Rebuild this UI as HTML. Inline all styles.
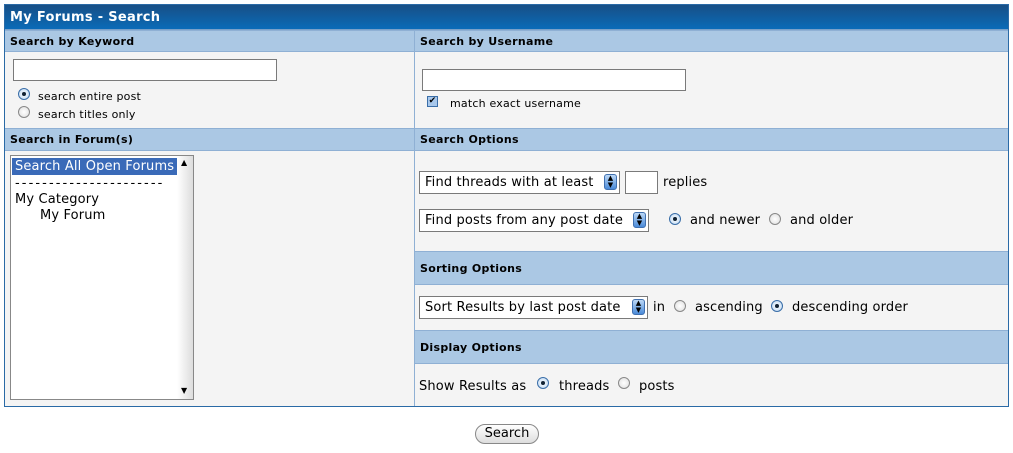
<!DOCTYPE html>
<html><head><style>
*{box-sizing:border-box;margin:0;padding:0}
body{width:1013px;height:453px;background:#fff;font-family:"DejaVu Sans",Verdana,sans-serif;font-size:13px;letter-spacing:0.15px;color:#000;position:relative;overflow:hidden}
div,span{position:absolute}
.frame{left:4px;top:4px;width:1005px;height:403px;border:1px solid #2a6aa6;background:#f4f4f4}
.title{left:5px;top:5px;width:1003px;height:25px;background:linear-gradient(#184f86,#0a6bb8);color:#fff;font-weight:bold;font-size:13px;padding:5px 5px;border-bottom:1px solid #7aa0c8;letter-spacing:0.3px}
.h{background:#abc8e4;font-weight:bold;font-size:11px;letter-spacing:0.3px;padding-left:5px;border-top:1px solid #8fb0d4;border-bottom:1px solid #8fb0d4;display:flex;align-items:center}
.vl{left:414px;top:30px;width:1px;height:376px;background:#8fb0d4}
.inp{background:#fff;border:1px solid #7a7a7a}
.rad{width:12px;height:12px;border-radius:50%;border:1px solid #888;background:radial-gradient(#fff,#ddd)}
.rad.on::after{content:"";position:absolute;left:3px;top:3px;width:4px;height:4px;border-radius:50%;background:#123}
.rad.on{border-color:#3a6ea8;background:radial-gradient(#fff,#b8d4f0)}
.sel{background:#fff;border:1px solid #7a7a7a;padding:3px 5px;white-space:nowrap}
.arr{width:13px;height:16px;top:2px;right:2px;background:linear-gradient(#bcd8f6,#4a8ad8);border-radius:3px;border:1px solid #4070b0;color:#000;font-size:7px;line-height:7px;text-align:center;letter-spacing:0}
.t{white-space:nowrap}
.s{font-size:11px;letter-spacing:0.2px}
</style></head><body>
<div class="frame"></div>
<div class="title">My Forums - Search</div>
<div class="vl"></div>
<div class="h" style="left:5px;top:30px;width:409px;height:22px">Search by Keyword</div>
<div class="h" style="left:415px;top:30px;width:593px;height:22px">Search by Username</div>
<div class="inp" style="left:13px;top:59px;width:264px;height:22px"></div>
<div class="rad on" style="left:18px;top:88px"></div><span class="t s" style="left:38px;top:90px">search entire post</span>
<div class="rad" style="left:18px;top:106px"></div><span class="t s" style="left:38px;top:108px">search titles only</span>
<div class="inp" style="left:422px;top:69px;width:264px;height:22px"></div>
<div style="left:427px;top:96px;width:11px;height:11px;border:1px solid #3a6ea8;background:#a8c8ec;font-size:9px;line-height:9px;text-align:center">✔</div>
<span class="t s" style="left:450px;top:97px">match exact username</span>
<div class="h" style="left:5px;top:128px;width:409px;height:23px">Search in Forum(s)</div>
<div class="h" style="left:415px;top:128px;width:593px;height:23px">Search Options</div>
<div style="left:10px;top:155px;width:184px;height:245px;background:#fff;border:1px solid #888"></div>
<div style="left:12px;top:158px;width:165px;height:17px;background:#3a6ab8;color:#fff;padding-left:3px;padding-top:1px" class="t">Search All Open Forums</div>
<div style="left:177px;top:156px;width:16px;height:243px;background:linear-gradient(90deg,#fff,#ddd);font-size:8px;text-align:center"><span style="left:4px;top:2px">▲</span><span style="left:4px;top:230px">▼</span></div>
<span class="t" style="left:15px;top:176px;letter-spacing:2.1px">----------------------</span>
<span class="t" style="left:15px;top:192px">My Category</span>
<span class="t" style="left:40px;top:208px">My Forum</span>
<div class="sel" style="left:419px;top:171px;width:201px;height:23px">Find threads with at least<div class="arr">▲<br>▼</div></div>
<div class="inp" style="left:625px;top:171px;width:33px;height:23px"></div>
<span class="t" style="left:663px;top:175px">replies</span>
<div class="sel" style="left:419px;top:209px;width:230px;height:23px">Find posts from any post date<div class="arr">▲<br>▼</div></div>
<div class="rad on" style="left:669px;top:213px"></div><span class="t" style="left:690px;top:213px">and newer</span>
<div class="rad" style="left:769px;top:213px"></div><span class="t" style="left:790px;top:213px">and older</span>
<div class="h" style="left:415px;top:251px;width:593px;height:34px">Sorting Options</div>
<div class="sel" style="left:419px;top:296px;width:229px;height:23px">Sort Results by last post date<div class="arr">▲<br>▼</div></div>
<span class="t" style="left:653px;top:300px">in</span>
<div class="rad" style="left:674px;top:300px"></div><span class="t" style="left:695px;top:300px">ascending</span>
<div class="rad on" style="left:771px;top:300px"></div><span class="t" style="left:792px;top:300px">descending order</span>
<div class="h" style="left:415px;top:330px;width:593px;height:34px">Display Options</div>
<span class="t" style="left:419px;top:379px">Show Results as</span>
<div class="rad on" style="left:537px;top:377px"></div><span class="t" style="left:559px;top:379px">threads</span>
<div class="rad" style="left:618px;top:377px"></div><span class="t" style="left:639px;top:379px">posts</span>
<div style="left:475px;top:424px;width:64px;height:20px;border:1px solid #888;border-radius:10px;background:linear-gradient(#fff,#ddd);text-align:center;line-height:18px;letter-spacing:0">Search</div>
</body></html>
